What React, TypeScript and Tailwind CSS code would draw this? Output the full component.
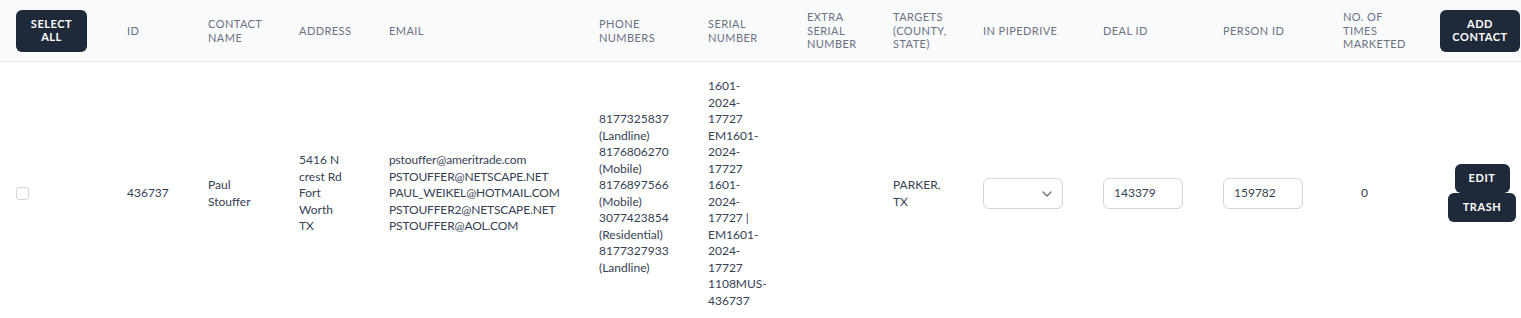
import React from "react";

const cols =
  "grid grid-cols-[111px_81px_91px_90px_210px_109px_99px_86px_90px_120px_120px_120px_97px_97px]";

function HeaderText({ children }: { children: React.ReactNode }) {
  return (
    <div className="pl-4 text-[11px] leading-[13.4px] font-normal uppercase tracking-[0.04em] text-gray-500">
      {children}
    </div>
  );
}

function Lines({ lines, className = "" }: { lines: string[]; className?: string }) {
  return (
    <div className={`pl-4 ${className}`}>
      {lines.map((l, i) => (
        <div key={i} className="whitespace-nowrap">
          {l}
        </div>
      ))}
    </div>
  );
}

export default function App() {
  return (
    <div
      className="w-[1521px] h-[318px] overflow-hidden bg-white"
      style={{ fontFamily: "Lato, 'Noto Sans', sans-serif" }}
    >
      {/* Header */}
      <div className={`${cols} h-[62px] items-center bg-gray-50 border-b border-gray-200`}>
        <div className="pl-4">
          <button className="w-[71px] h-[42px] rounded-md bg-gray-800 text-white text-[11px] font-bold tracking-wider leading-[12.7px] uppercase">
            Select
            <br />
            All
          </button>
        </div>
        <HeaderText>ID</HeaderText>
        <HeaderText>
          Contact
          <br />
          Name
        </HeaderText>
        <HeaderText>Address</HeaderText>
        <HeaderText>Email</HeaderText>
        <HeaderText>
          Phone
          <br />
          Numbers
        </HeaderText>
        <HeaderText>
          Serial
          <br />
          Number
        </HeaderText>
        <HeaderText>
          Extra
          <br />
          Serial
          <br />
          Number
        </HeaderText>
        <HeaderText>
          Targets
          <br />
          (County,
          <br />
          State)
        </HeaderText>
        <HeaderText>In Pipedrive</HeaderText>
        <HeaderText>Deal ID</HeaderText>
        <HeaderText>Person ID</HeaderText>
        <HeaderText>
          No. Of
          <br />
          Times
          <br />
          Marketed
        </HeaderText>
        <div className="pl-4">
          <button className="w-[80px] h-[42px] rounded-md bg-gray-800 text-white text-[11px] font-bold tracking-wider leading-[12.7px] uppercase">
            Add
            <br />
            Contact
          </button>
        </div>
      </div>

      {/* Row */}
      <div
        className={`${cols} items-center py-4 text-[12px] leading-[16.5px] text-gray-700`}
      >
        <div className="pl-4">
          <span className="block w-[13px] h-[13px] rounded-[3px] border border-gray-300 bg-white" />
        </div>
        <div className="pl-4">436737</div>
        <Lines lines={["Paul", "Stouffer"]} />
        <Lines lines={["5416 N", "crest Rd", "Fort", "Worth", "TX"]} />
        <Lines
          className="tracking-[-0.15px]"
          lines={[
            "pstouffer@ameritrade.com",
            "PSTOUFFER@NETSCAPE.NET",
            "PAUL_WEIKEL@HOTMAIL.COM",
            "PSTOUFFER2@NETSCAPE.NET",
            "PSTOUFFER@AOL.COM",
          ]}
        />
        <Lines
          lines={[
            "8177325837",
            "(Landline)",
            "8176806270",
            "(Mobile)",
            "8176897566",
            "(Mobile)",
            "3077423854",
            "(Residential)",
            "8177327933",
            "(Landline)",
          ]}
        />
        <Lines
          lines={[
            "1601-",
            "2024-",
            "17727",
            "EM1601-",
            "2024-",
            "17727",
            "1601-",
            "2024-",
            "17727 |",
            "EM1601-",
            "2024-",
            "17727",
            "1108MUS-",
            "436737",
          ]}
        />
        <div className="pl-4" />
        <Lines lines={["PARKER,", "TX"]} />
        <div className="pl-4">
          <div className="w-[80px] h-[31px] rounded-md border border-gray-300 bg-white flex items-center justify-end pr-[10px]">
            <svg width="10" height="6" viewBox="0 0 10 6" fill="none">
              <path
                d="M1 1l4 4 4-4"
                stroke="#6b7280"
                strokeWidth="1.4"
                strokeLinecap="round"
                strokeLinejoin="round"
              />
            </svg>
          </div>
        </div>
        <div className="pl-4">
          <div className="w-[80px] h-[31px] rounded-md border border-gray-300 bg-white flex items-center pl-[10px]">
            143379
          </div>
        </div>
        <div className="pl-4">
          <div className="w-[80px] h-[31px] rounded-md border border-gray-300 bg-white flex items-center pl-[10px]">
            159782
          </div>
        </div>
        <div className="pl-[34px]">0</div>
        <div className="pl-4">
          <div className="w-[84px] flex flex-col items-center -mt-[2px]">
            <button className="w-[55px] h-[29px] rounded-md bg-gray-800 text-white text-[11px] font-bold tracking-wider">
              EDIT
            </button>
            <button className="w-[68px] h-[29px] rounded-md bg-gray-800 text-white text-[11px] font-bold tracking-wider">
              TRASH
            </button>
          </div>
        </div>
      </div>
    </div>
  );
}
